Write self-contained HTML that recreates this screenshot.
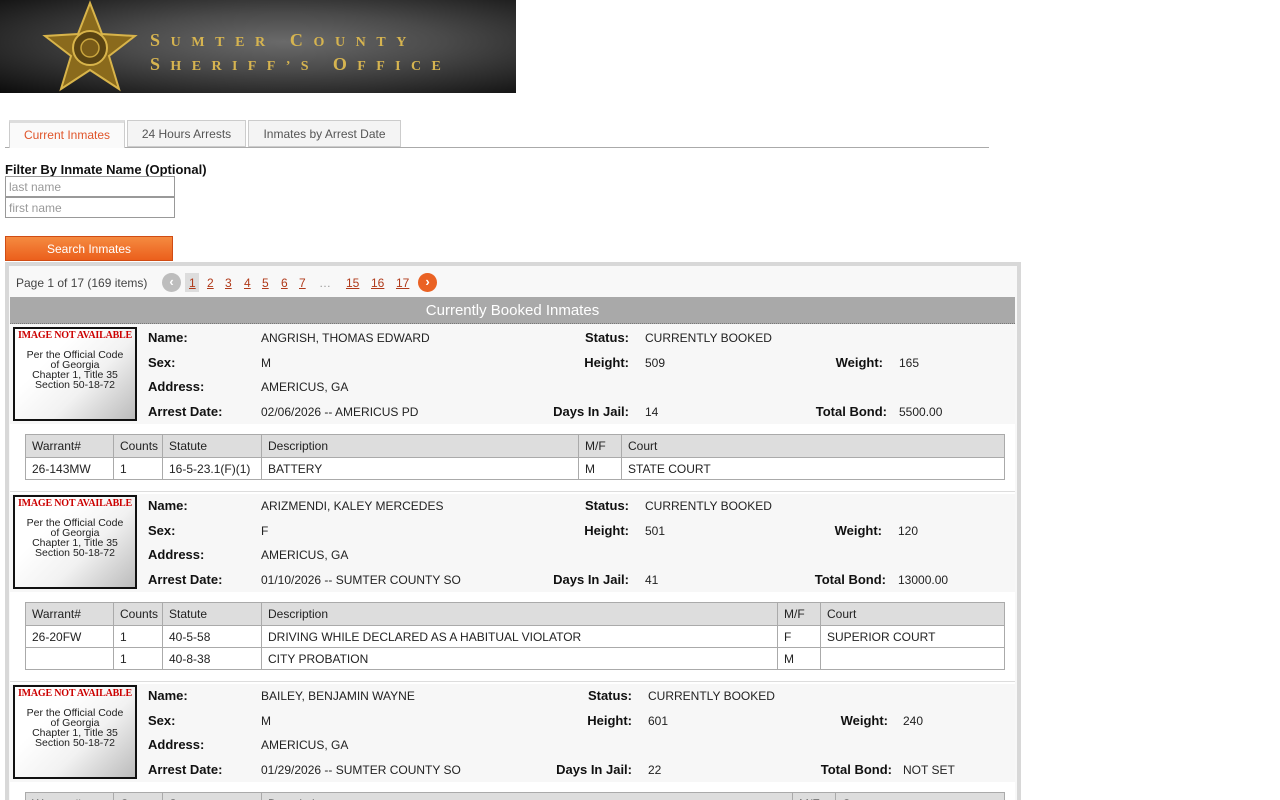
<!DOCTYPE html>
<html><head><meta charset="utf-8">
<style>
*{margin:0;padding:0;box-sizing:border-box}
html,body{width:1280px;height:800px;overflow:hidden}
body{background:#fff;font-family:"Liberation Sans",Tahoma,sans-serif;font-size:12px;color:#222;position:relative}
.a{position:absolute;white-space:nowrap}
.lb{position:absolute;font-weight:bold;font-size:13px;color:#111;white-space:nowrap;line-height:16px}
.v{position:absolute;font-size:12px;color:#222;white-space:nowrap;line-height:16px}
.rec{position:absolute;left:10px;width:1005px;height:100px;background:#f7f7f7}
.photo{position:absolute;left:13px;width:124px;height:94px;border:2px solid #111;background:linear-gradient(135deg,#fff 30%,#f2f2f2 60%,#bbb 100%);text-align:center;font-family:"Liberation Sans",Arial,sans-serif;font-size:10.5px;line-height:10px;color:#222}
.photo b{display:block;font-family:"Liberation Serif",serif;color:#c00;font-size:10px;margin:2px 0 9px;letter-spacing:-.2px}
table{position:absolute;left:25px;width:980px;border-collapse:collapse;background:#fff;font-size:12px;table-layout:fixed}
td{border:1px solid #aaa;height:22px;padding:0 6px;color:#222;overflow:hidden;white-space:nowrap}
tr.h td{background:#ddd;height:23px}
.sep{position:absolute;left:10px;width:1005px;height:1px;background:#ddd}
.pg{position:absolute;top:275px;color:#b03a1a;text-decoration:underline;font-size:12px}
</style></head><body>
<div class="a" style="left:0;top:0;width:516px;height:93px;background:radial-gradient(ellipse at 55% 45%,#6a6a6a 0%,#4a4a4a 40%,#262626 75%,#0c0c0c 100%)">
<svg width="516" height="93" style="position:absolute;left:0;top:0">
<polygon points="90,3 102,34 135,36 109,56 119,89 90,70 61,89 71,56 45,36 78,34" fill="#8a6a1c" stroke="#d8b44a" stroke-width="2"/>
<circle cx="90" cy="48" r="17" fill="#5a4412" stroke="#d8b44a" stroke-width="2"/>
<circle cx="90" cy="48" r="9" fill="#7a5c18" stroke="#c9a53e" stroke-width="1.5"/>
<text x="150" y="46" font-family="Liberation Serif,serif" font-weight="bold" font-size="14" fill="#d6b450" letter-spacing="10.6"><tspan font-size="18">S</tspan>UMTER <tspan font-size="18">C</tspan>OUNTY</text>
<text x="150" y="70" font-family="Liberation Serif,serif" font-weight="bold" font-size="14" fill="#d6b450" letter-spacing="10.4"><tspan font-size="18">S</tspan>HERIFF’S <tspan font-size="18">O</tspan>FFICE</text>
</svg></div>
<div class="a" style="left:5px;top:147px;width:984px;height:1px;background:#aaa"></div>
<div class="a" style="left:9px;top:120px;width:116px;height:28px;border:1px solid #ccc;border-top:3px solid #ddd;border-bottom:none;background:#fafafa;color:#e0552a;text-align:center;line-height:24px">Current Inmates</div>
<div class="a" style="left:127px;top:120px;width:119px;height:27px;border:1px solid #ccc;background:#f4f4f4;color:#555;text-align:center;line-height:26px">24 Hours Arrests</div>
<div class="a" style="left:248px;top:120px;width:153px;height:27px;border:1px solid #ccc;background:#f4f4f4;color:#555;text-align:center;line-height:26px">Inmates by Arrest Date</div>
<div class="lb" style="left:5px;top:162px">Filter By Inmate Name (Optional)</div>
<div class="a" style="left:5px;top:176px;width:170px;height:21px;border:1px solid #999;color:#999;padding-left:3px;line-height:21px">last name</div>
<div class="a" style="left:5px;top:197px;width:170px;height:21px;border:1px solid #999;color:#999;padding-left:3px;line-height:21px">first name</div>
<div class="a" style="left:5px;top:236px;width:168px;height:25px;background:linear-gradient(#f58a40,#eb5f1c);border:1px solid #d04c14;color:#fff;text-align:center;line-height:24px">Search Inmates</div>
<div class="a" style="left:5px;top:262px;width:1016px;height:538px;border:4px solid #d8d8d8;border-bottom:none;background:#f8f8f8"></div>
<div class="a" style="left:16px;top:276px;color:#444">Page 1 of 17 (169 items)</div>
<div class="a" style="left:162px;top:273px;width:19px;height:19px;border-radius:50%;background:#bdbdbd;color:#fff;text-align:center;line-height:18px;font-size:13px;font-weight:bold">‹</div>
<div class="a" style="left:185px;top:273px;width:14px;height:19px;background:#ddd"></div>
<span class="pg" style="left:189px;top:276px">1</span><span class="pg" style="left:207px;top:276px">2</span><span class="pg" style="left:225px;top:276px">3</span><span class="pg" style="left:244px;top:276px">4</span><span class="pg" style="left:262px;top:276px">5</span><span class="pg" style="left:281px;top:276px">6</span><span class="pg" style="left:299px;top:276px">7</span>
<span class="a" style="left:319px;top:276px;color:#999">…</span>
<span class="pg" style="left:346px;top:276px">15</span><span class="pg" style="left:371px;top:276px">16</span><span class="pg" style="left:396px;top:276px">17</span>
<div class="a" style="left:418px;top:273px;width:19px;height:19px;border-radius:50%;background:#ea6224;color:#fff;text-align:center;line-height:18px;font-size:13px;font-weight:bold">›</div>
<div class="a" style="left:10px;top:297px;width:1005px;height:27px;background:#a9a9a9;border-bottom:1px dotted #777;color:#fff;font-size:15px;text-align:center;line-height:28px">Currently Booked Inmates</div>
<div class="a" style="left:10px;top:324px;width:1005px;height:480px;background:#fff"></div>

<div class="rec" style="top:324px"></div>
<div class="photo" style="top:327px"><b>IMAGE NOT AVAILABLE</b>Per the Official Code<br>of Georgia<br>Chapter 1, Title 35<br>Section 50-18-72</div>
<div class="lb" style="left:148px;top:330px">Name:</div><div class="v" style="left:261px;top:330px">ANGRISH, THOMAS EDWARD</div>
<div class="lb" style="left:148px;top:355px">Sex:</div><div class="v" style="left:261px;top:355px">M</div>
<div class="lb" style="left:148px;top:379px">Address:</div><div class="v" style="left:261px;top:379px">AMERICUS, GA</div>
<div class="lb" style="left:148px;top:404px">Arrest Date:</div><div class="v" style="left:261px;top:404px">02/06/2026 -- AMERICUS PD</div>
<div class="lb" style="right:651px;top:330px">Status:</div><div class="v" style="left:645px;top:330px">CURRENTLY BOOKED</div>
<div class="lb" style="right:651px;top:355px">Height:</div><div class="v" style="left:645px;top:355px">509</div>
<div class="lb" style="right:651px;top:404px">Days In Jail:</div><div class="v" style="left:645px;top:404px">14</div>
<div class="lb" style="right:397px;top:355px">Weight:</div><div class="v" style="left:899px;top:355px">165</div>
<div class="lb" style="right:393px;top:404px">Total Bond:</div><div class="v" style="left:899px;top:404px">5500.00</div>
<table style="top:434px"><colgroup><col style="width:88px"><col style="width:49px"><col style="width:99px"><col style="width:317px"><col style="width:43px"><col></colgroup>
<tr class="h"><td>Warrant#</td><td>Counts</td><td>Statute</td><td>Description</td><td>M/F</td><td>Court</td></tr>
<tr><td>26-143MW</td><td>1</td><td>16-5-23.1(F)(1)</td><td>BATTERY</td><td>M</td><td>STATE COURT</td></tr></table>
<div class="sep" style="top:491px"></div>

<div class="rec" style="top:494px;height:98px"></div>
<div class="photo" style="top:495px"><b>IMAGE NOT AVAILABLE</b>Per the Official Code<br>of Georgia<br>Chapter 1, Title 35<br>Section 50-18-72</div>
<div class="lb" style="left:148px;top:498px">Name:</div><div class="v" style="left:261px;top:498px">ARIZMENDI, KALEY MERCEDES</div>
<div class="lb" style="left:148px;top:523px">Sex:</div><div class="v" style="left:261px;top:523px">F</div>
<div class="lb" style="left:148px;top:547px">Address:</div><div class="v" style="left:261px;top:547px">AMERICUS, GA</div>
<div class="lb" style="left:148px;top:572px">Arrest Date:</div><div class="v" style="left:261px;top:572px">01/10/2026 -- SUMTER COUNTY SO</div>
<div class="lb" style="right:651px;top:498px">Status:</div><div class="v" style="left:645px;top:498px">CURRENTLY BOOKED</div>
<div class="lb" style="right:651px;top:523px">Height:</div><div class="v" style="left:645px;top:523px">501</div>
<div class="lb" style="right:651px;top:572px">Days In Jail:</div><div class="v" style="left:645px;top:572px">41</div>
<div class="lb" style="right:398px;top:523px">Weight:</div><div class="v" style="left:898px;top:523px">120</div>
<div class="lb" style="right:394px;top:572px">Total Bond:</div><div class="v" style="left:898px;top:572px">13000.00</div>
<table style="top:602px"><colgroup><col style="width:88px"><col style="width:49px"><col style="width:99px"><col style="width:516px"><col style="width:43px"><col></colgroup>
<tr class="h"><td>Warrant#</td><td>Counts</td><td>Statute</td><td>Description</td><td>M/F</td><td>Court</td></tr>
<tr><td>26-20FW</td><td>1</td><td>40-5-58</td><td>DRIVING WHILE DECLARED AS A HABITUAL VIOLATOR</td><td>F</td><td>SUPERIOR COURT</td></tr>
<tr><td></td><td>1</td><td>40-8-38</td><td>CITY PROBATION</td><td>M</td><td></td></tr></table>
<div class="sep" style="top:681px"></div>

<div class="rec" style="top:684px;height:98px"></div>
<div class="photo" style="top:685px"><b>IMAGE NOT AVAILABLE</b>Per the Official Code<br>of Georgia<br>Chapter 1, Title 35<br>Section 50-18-72</div>
<div class="lb" style="left:148px;top:688px">Name:</div><div class="v" style="left:261px;top:688px">BAILEY, BENJAMIN WAYNE</div>
<div class="lb" style="left:148px;top:713px">Sex:</div><div class="v" style="left:261px;top:713px">M</div>
<div class="lb" style="left:148px;top:737px">Address:</div><div class="v" style="left:261px;top:737px">AMERICUS, GA</div>
<div class="lb" style="left:148px;top:762px">Arrest Date:</div><div class="v" style="left:261px;top:762px">01/29/2026 -- SUMTER COUNTY SO</div>
<div class="lb" style="right:648px;top:688px">Status:</div><div class="v" style="left:648px;top:688px">CURRENTLY BOOKED</div>
<div class="lb" style="right:648px;top:713px">Height:</div><div class="v" style="left:648px;top:713px">601</div>
<div class="lb" style="right:648px;top:762px">Days In Jail:</div><div class="v" style="left:648px;top:762px">22</div>
<div class="lb" style="right:392px;top:713px">Weight:</div><div class="v" style="left:903px;top:713px">240</div>
<div class="lb" style="right:388px;top:762px">Total Bond:</div><div class="v" style="left:903px;top:762px">NOT SET</div>
<table style="top:792px"><colgroup><col style="width:88px"><col style="width:49px"><col style="width:99px"><col style="width:531px"><col style="width:43px"><col></colgroup>
<tr class="h"><td>Warrant#</td><td>Counts</td><td>Statute</td><td>Description</td><td>M/F</td><td>Court</td></tr></table>
</body></html>
